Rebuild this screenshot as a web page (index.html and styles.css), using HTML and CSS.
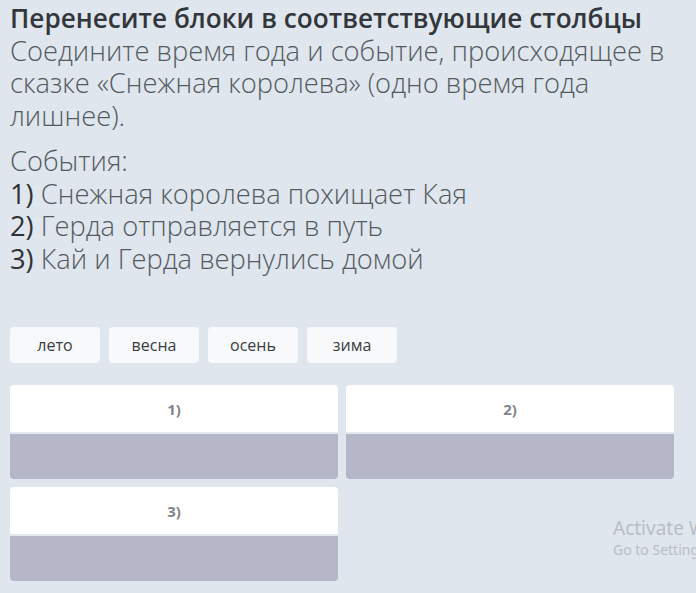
FILE: index.html
```html
<!DOCTYPE html>
<html lang="ru">
<head>
<meta charset="utf-8">
<link rel="stylesheet" href="styles.css">
</head>
<body>
<div class="page">
  <div class="task">
    <div class="title">Перенесите блоки в соответствующие столбцы</div>
    <div class="desc">Соедините время года и событие, происходящее в сказке «Снежная королева» (одно время года лишнее).</div>
    <div class="events">
      <div>События:</div>
      <div><span class="num">1)</span> Снежная королева похищает Кая</div>
      <div><span class="num">2)</span> Герда отправляется в путь</div>
      <div><span class="num">3)</span> Кай и Герда вернулись домой</div>
    </div>
  </div>
  <div class="chips">
    <div class="chip">лето</div>
    <div class="chip">весна</div>
    <div class="chip">осень</div>
    <div class="chip">зима</div>
  </div>
  <div class="columns">
    <div class="col"><div class="col-head">1)</div><div class="col-drop"></div></div>
    <div class="col"><div class="col-head">2)</div><div class="col-drop"></div></div>
    <div class="col"><div class="col-head">3)</div><div class="col-drop"></div></div>
  </div>
</div>
<div class="watermark">
  <div class="wm-big">Activate W</div>
  <div class="wm-small">Go to Setting</div>
</div>
</body>
</html>
```
FILE: styles.css
```css
html, body {
  margin: 0;
  padding: 0;
  height: 100%;
  overflow: hidden;
}
body {
  background: #dfe6ed;
  font-family: "Open Sans", "Noto Sans", sans-serif;
  color: #4b4f54;
  position: relative;
}
.page {
  padding: 2px 22px 0 10px;
}
.task {
  font-size: 27.3px;
  line-height: 32.5px;
}
.title {
  font-size: 26.2px;
  font-weight: 600;
  color: #33373b;
}
.desc {
  color: #545a60;
  font-weight: 300;
}
.events {
  margin-top: 13px;
  color: #545a60;
  font-weight: 300;
}
.num {
  color: #2f3236;
  font-weight: 400;
}
.chips {
  display: flex;
  gap: 9px;
  margin-top: 52px;
}
.chip {
  width: 90px;
  height: 36px;
  box-sizing: border-box;
  background: #f8f9fb;
  border-radius: 4px;
  font-size: 16px;
  color: #3a3d40;
  display: flex;
  align-items: center;
  justify-content: center;
}
.columns {
  display: grid;
  grid-template-columns: 328px 328px;
  gap: 8px;
  margin-top: 22px;
}
.col {
  border-radius: 4px;
  overflow: hidden;
  height: 94px;
  display: flex;
  flex-direction: column;
}
.col-head {
  height: 49px;
  background: #ffffff;
  border-bottom: 2px solid #e3e7ee;
  box-sizing: border-box;
  display: flex;
  align-items: center;
  justify-content: center;
  font-size: 15px;
  font-weight: 700;
  color: #80858b;
}
.col-drop {
  flex: 1;
  background: #b6b6c9;
}
.watermark {
  position: absolute;
  left: 613px;
  top: 516px;
  width: 83px;
  overflow: hidden;
  color: #b9bec5;
  white-space: nowrap;
}
.wm-big {
  font-family: "Noto Sans", "Open Sans", sans-serif;
  font-size: 19px;
  line-height: 25px;
}
.wm-small {
  font-family: "Noto Sans", "Open Sans", sans-serif;
  font-size: 14px;
  line-height: 18px;
}
```
